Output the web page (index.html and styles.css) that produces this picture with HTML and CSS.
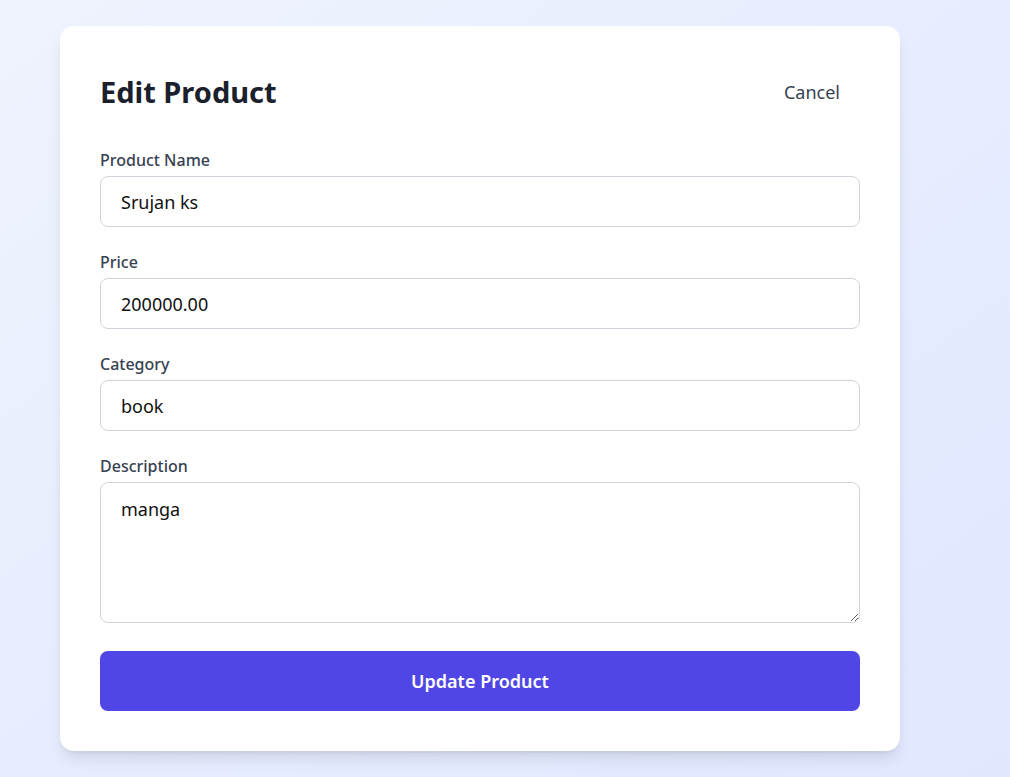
FILE: index.html
```html
<!DOCTYPE html>
<html>
<head>
<meta charset="utf-8">
<link rel="stylesheet" href="styles.css">
</head>
<body>
<div class="page">
  <div class="card">
    <div class="head">
      <h1 class="title">Edit Product</h1>
      <button class="cancel" type="button">Cancel</button>
    </div>
    <form class="form">
      <div class="field">
        <label class="label">Product Name</label>
        <input class="input" type="text" value="Srujan ks">
      </div>
      <div class="field">
        <label class="label">Price</label>
        <input class="input" type="text" value="200000.00">
      </div>
      <div class="field">
        <label class="label">Category</label>
        <input class="input" type="text" value="book">
      </div>
      <div class="field">
        <label class="label">Description</label>
        <textarea class="input area">manga</textarea>
      </div>
      <button class="submit" type="button">Update Product</button>
    </form>
  </div>
</div>
</body>
</html>
```
FILE: styles.css
```css
* { box-sizing: border-box; }
html, body { margin: 0; height: 100%; }
body {
  font-family: "Noto Sans", "Open Sans", sans-serif;
  background: linear-gradient(to bottom right, #eef3fd, #e0e7ff);
  color: #1f2937;
}
.page {
  padding: 26px 0 0 60px;
}
.card {
  width: 840px;
  background: #fff;
  border-radius: 14px;
  box-shadow: 0 10px 15px -3px rgba(0,0,0,0.1), 0 4px 6px -4px rgba(0,0,0,0.1);
  padding: 40px;
}
.head {
  display: flex;
  align-items: center;
  justify-content: space-between;
  height: 52px;
  margin-bottom: 31px;
}
.title {
  margin: 0;
  font-size: 29px;
  font-weight: 700;
  color: #1a202c;
  line-height: 36px;
}
.cancel {
  font-family: inherit;
  font-size: 18px;
  color: #374151;
  background: none;
  border: none;
  padding: 12px 20px;
  line-height: 28px;
}
.form {
  display: flex;
  flex-direction: column;
  gap: 24px;
}
.field {
  display: flex;
  flex-direction: column;
}
.label {
  font-size: 16px;
  font-weight: 500;
  line-height: 23px;
  color: #374151;
  margin-bottom: 4px;
}
.input {
  font-family: inherit;
  font-size: 18px;
  line-height: 28px;
  color: #111;
  height: 51px;
  padding: 10px 20px;
  border: 1px solid #d1d5db;
  border-radius: 8px;
  outline: none;
  background: #fff;
}
.area {
  height: 141px;
  padding: 12px 20px;
  resize: vertical;
}
.submit {
  margin-top: 4px;
  height: 60px;
  border: none;
  border-radius: 8px;
  background: #4f46e5;
  color: #fff;
  font-family: inherit;
  font-size: 18px;
  font-weight: 600;
}
```
